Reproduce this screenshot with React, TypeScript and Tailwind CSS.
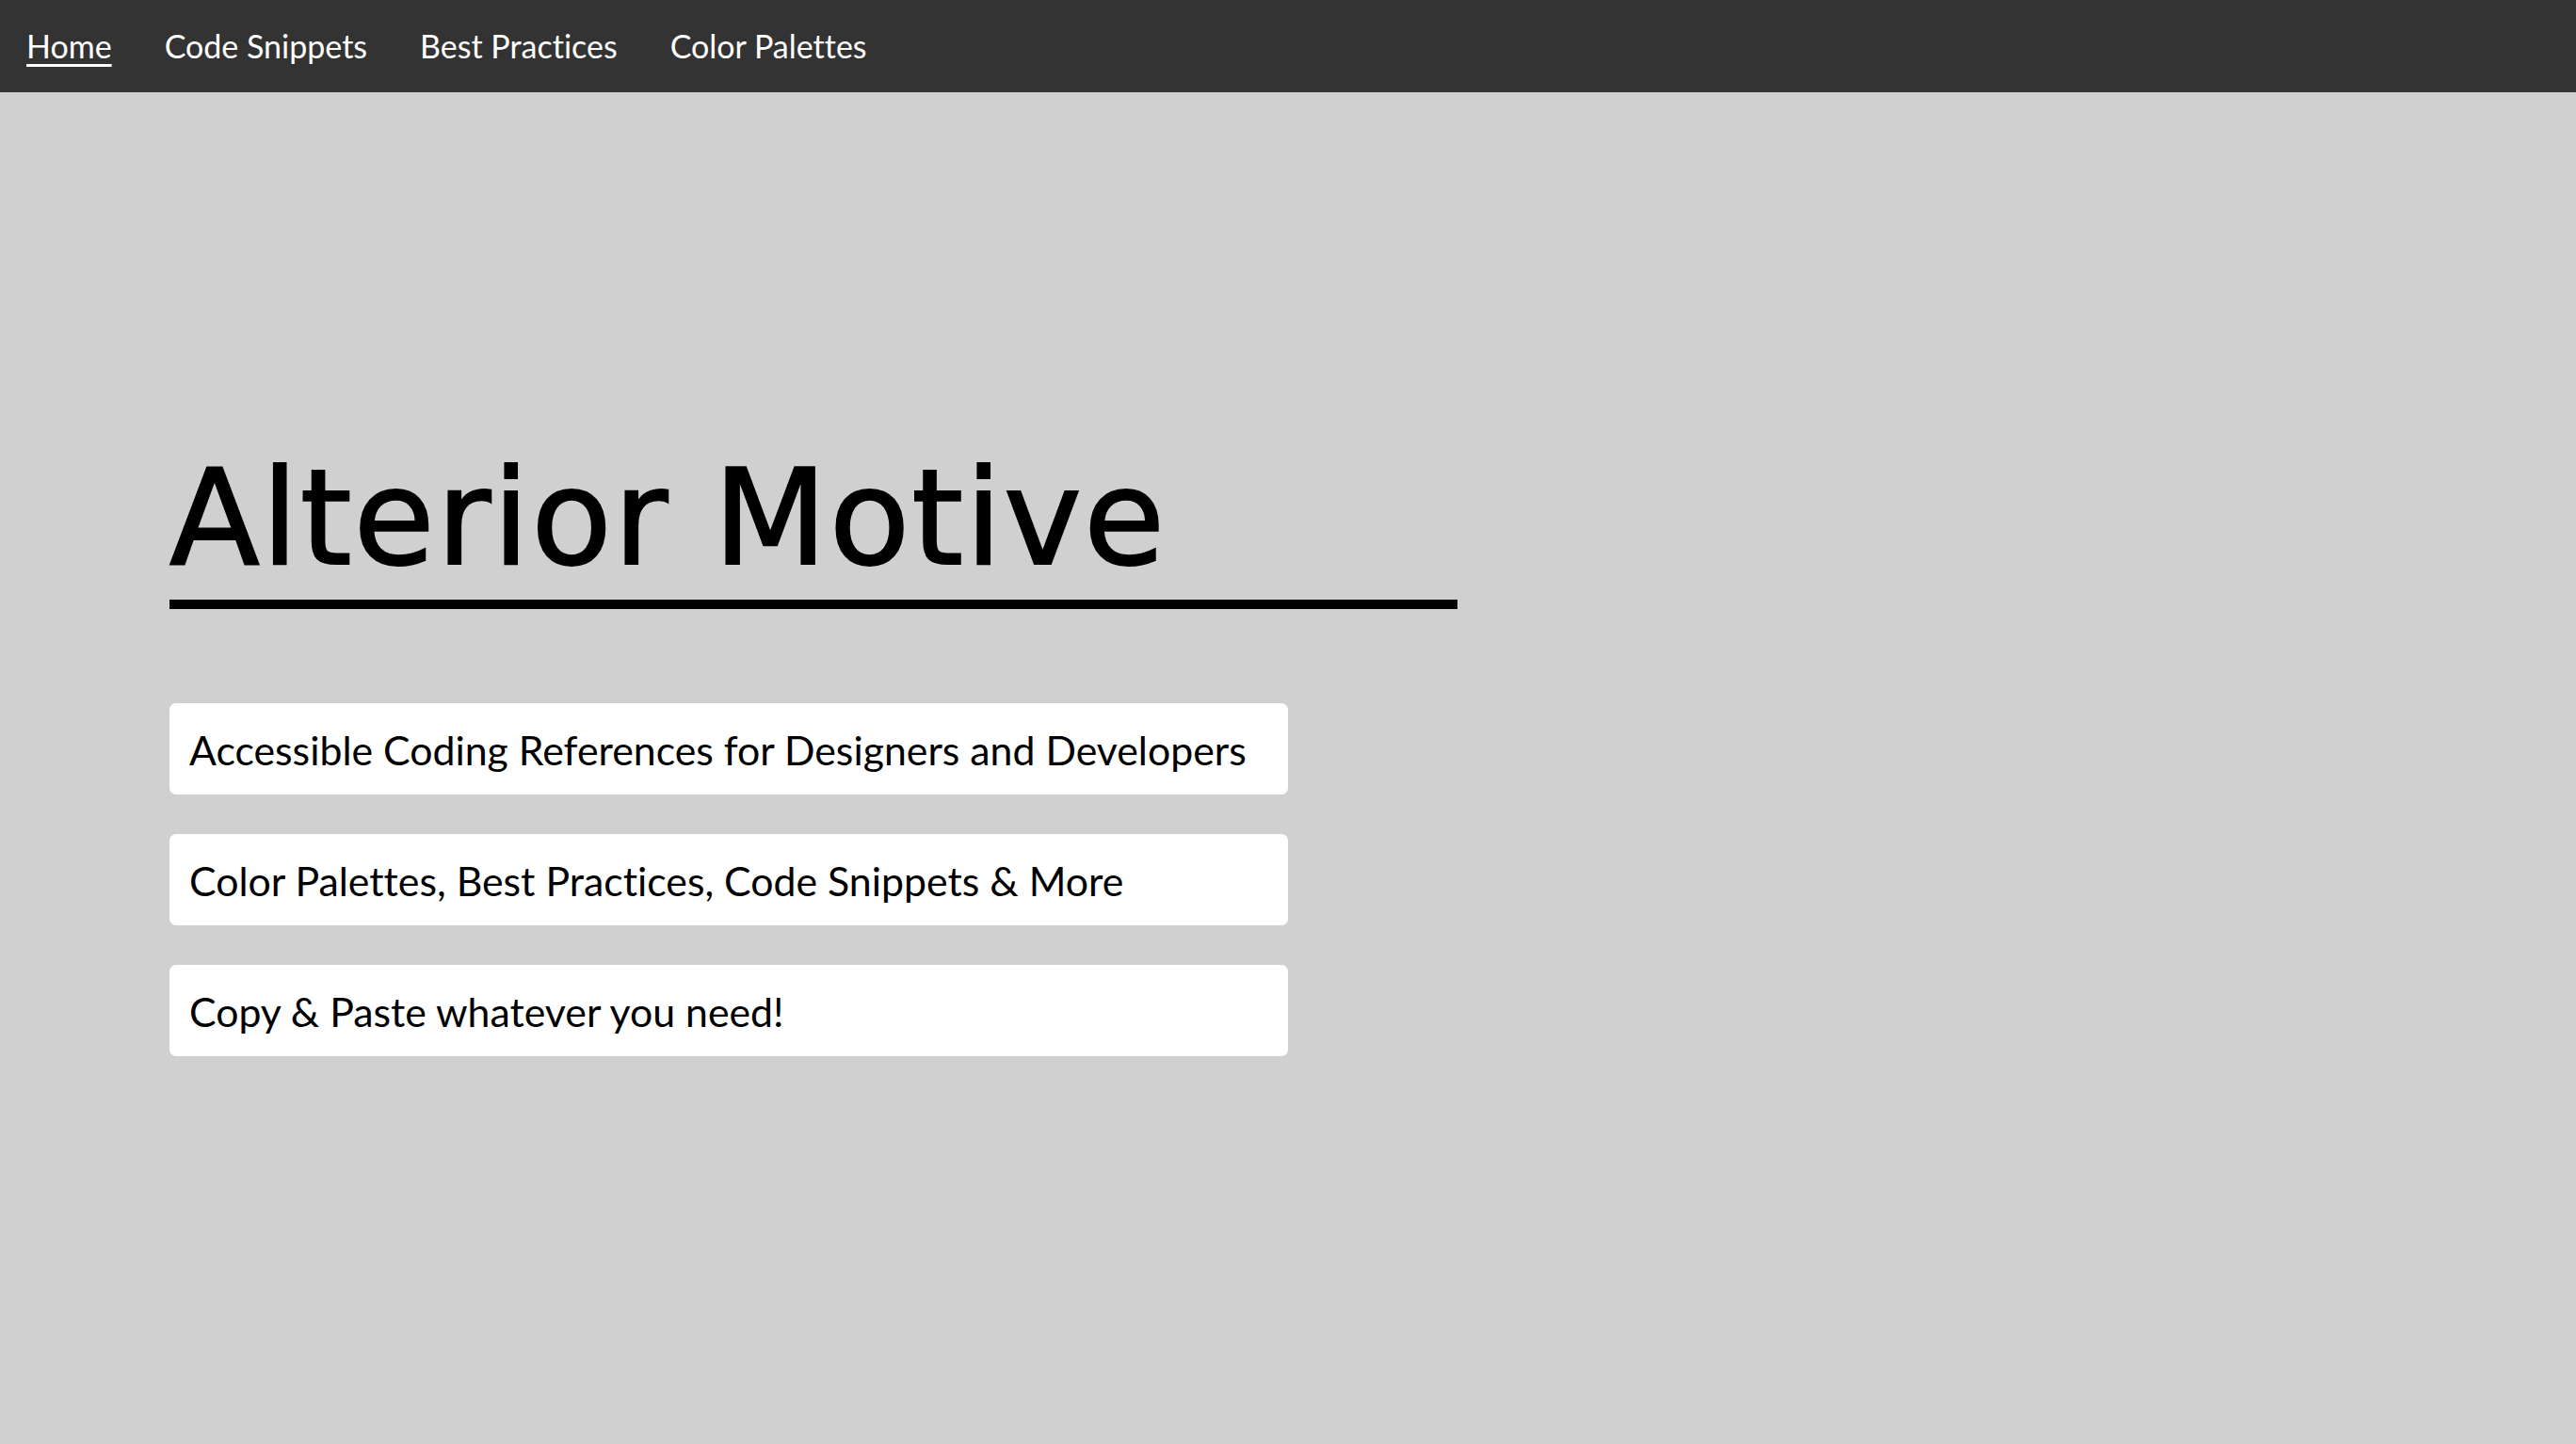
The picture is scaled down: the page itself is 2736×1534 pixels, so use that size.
import React from "react";

export default function App() {
  const links = ["Home", "Code Snippets", "Best Practices", "Color Palettes"];
  const lines = [
    "Accessible Coding References for Designers and Developers",
    "Color Palettes, Best Practices, Code Snippets & More",
    "Copy & Paste whatever you need!",
  ];
  return (
    <div className="min-h-[1534px] w-full bg-[#d0d0d0] font-['Lato',sans-serif] text-black [font-variant-ligatures:none]">
      <nav className="flex h-[98px] items-center bg-[#333333] px-0">
        {links.map((l, i) => (
          <a
            key={l}
            href="#"
            className={
              "px-[28px] text-[34px] leading-none text-white " +
              (i === 0 ? "underline underline-offset-[6px] decoration-[3px]" : "no-underline")
            }
          >
            {l}
          </a>
        ))}
      </nav>
      <main className="pl-[180px]">
        <div className="mt-[369px] w-[1368px] border-b-[10px] border-black pb-[2px]">
          <h1 className="font-['DejaVu_Sans',sans-serif] text-[140px] font-normal leading-[168px] tracking-[2px] [-webkit-text-stroke:2px_black]">
            Alterior Motive
          </h1>
        </div>
        <div className="mt-[100px] flex w-[1188px] flex-col gap-[42px]">
          {lines.map((t) => (
            <div key={t} className="flex h-[97px] items-center rounded-[7px] bg-white px-[21px] pt-[3px]">
              <span className="text-[42.8px] leading-none">{t}</span>
            </div>
          ))}
        </div>
      </main>
    </div>
  );
}
